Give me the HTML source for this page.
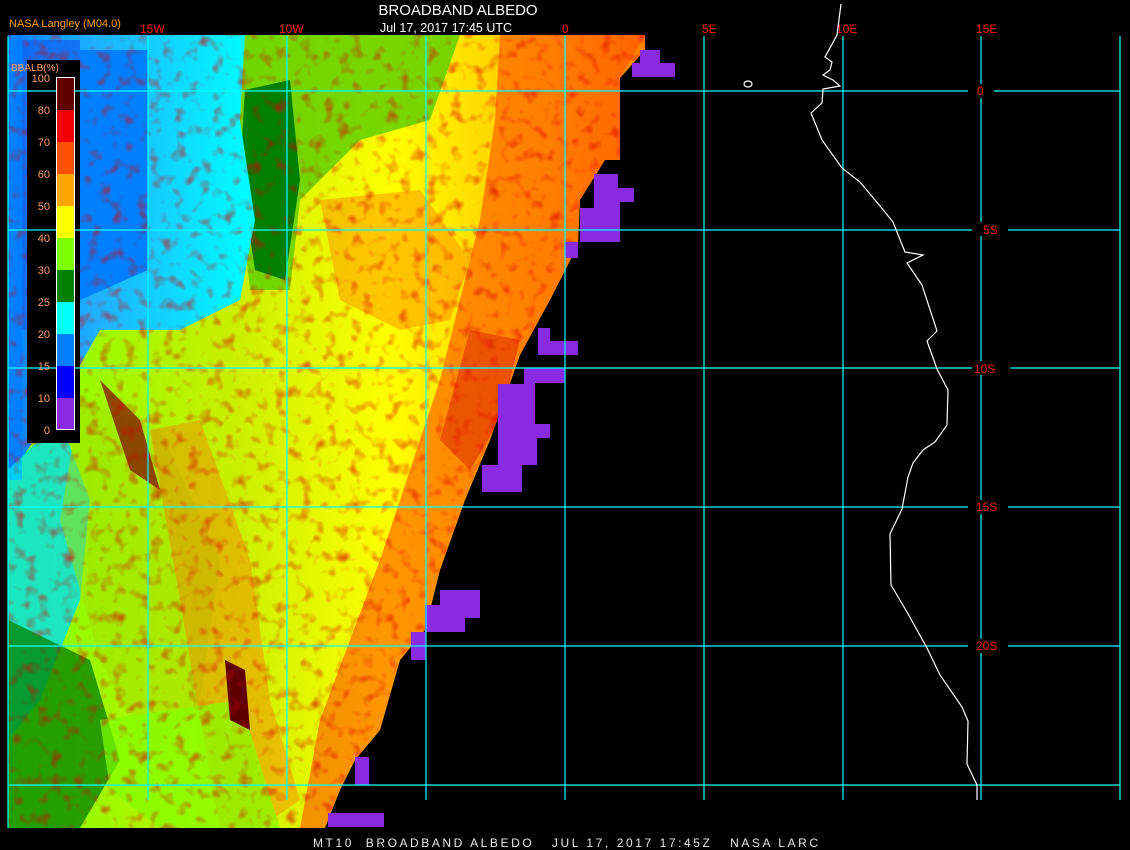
<!DOCTYPE html>
<html><head><meta charset="utf-8"><style>
html,body{margin:0;padding:0;background:#000;width:1130px;height:850px;overflow:hidden}
svg{display:block}
text{font-family:"Liberation Sans",sans-serif}
</style></head><body>
<svg width="1130" height="850" viewBox="0 0 1130 850" xmlns="http://www.w3.org/2000/svg">
<defs>
<linearGradient id="g1" x1="0" x2="1" y1="0" y2="0">
<stop offset="0" stop-color="#80ff00"/><stop offset="0.35" stop-color="#c8f000"/><stop offset="0.6" stop-color="#ffff00"/><stop offset="0.85" stop-color="#ffc000"/><stop offset="1" stop-color="#ff8000"/>
</linearGradient>
<linearGradient id="gb" x1="0" x2="1"><stop offset="0" stop-color="#0080ff"/><stop offset="0.35" stop-color="#20b0ff"/><stop offset="1" stop-color="#00ffff"/></linearGradient>
<filter id="tx"><feTurbulence type="fractalNoise" baseFrequency="0.08" numOctaves="2" seed="3"/><feColorMatrix values="0 0 0 0 0.7  0 0 0 0 0  0 0 0 0 0  0 0 0 1.6 -0.85"/><feComposite in2="SourceGraphic" operator="in"/></filter>
<clipPath id="cl"><polygon points="8,35 645,35 645,50 620,78 620,160 605,160 580,200 578,245 550,300 520,355 490,440 465,500 440,570 425,630 400,660 380,730 355,760 340,790 325,828 8,828"/></clipPath>
</defs>
<rect width="1130" height="850" fill="#000"/>
<g clip-path="url(#cl)">
<rect x="8" y="35" width="640" height="795" fill="url(#g1)"/>
<polygon points="500,35 645,35 620,78 620,160 580,200 578,245 550,300 520,355 490,440 465,500 440,570 425,630 400,660 380,730 355,760 340,790 325,828 300,828 320,720 350,640 380,560 410,470 440,380 460,300 480,220 495,120" fill="#ff5000" opacity="0.6"/>
<polygon points="320,200 420,190 470,260 450,320 400,330 340,300" fill="#ff9000" opacity="0.5"/>
<polygon points="470,330 520,340 500,420 470,470 440,440" fill="#e03000" opacity="0.6"/>
<polygon points="240,35 460,35 430,120 360,140 300,200 290,290 250,290 240,200" fill="#60d000" opacity="0.85"/>
<polygon points="245,90 290,80 300,180 285,280 255,270 240,170" fill="#008000"/>
<polygon points="8,35 245,35 240,120 255,220 240,300 180,330 100,330 60,400 8,480" fill="url(#gb)"/>
<rect x="8" y="35" width="14" height="445" fill="#0080ff"/>
<polygon points="22,40 80,40 80,320 22,330" fill="#1060f0" opacity="0.7"/>
<polygon points="80,50 148,50 148,270 80,300" fill="#0080ff"/>
<polygon points="8,470 60,420 90,500 80,600 40,700 8,740" fill="#00e0f0" opacity="0.8"/>
<polygon points="8,620 90,660 120,760 80,828 8,828" fill="#008000" opacity="0.75"/>
<polygon points="80,400 160,430 220,560 200,700 150,760 100,660 60,520" fill="#a0e000" opacity="0.5"/>
<polygon points="150,430 200,420 250,560 270,700 300,800 260,828 220,828 200,720 180,600" fill="#ff7000" opacity="0.4"/>
<polygon points="100,720 240,700 280,828 160,828 110,790" fill="#80ff00" opacity="0.7"/>
<polygon points="100,380 140,420 160,490 130,470" fill="#800000" opacity="0.7"/>
<polygon points="225,660 245,670 250,730 230,720" fill="#600000"/>
<rect x="8" y="35" width="640" height="795" filter="url(#tx)" fill="#fff"/>
</g>
<g fill="#8a2be2">
<polygon points="640,50 660,50 660,63 675,63 675,77 632,77 632,63 640,63"/>
<polygon points="594,174 618,174 618,188 634,188 634,202 620,202 620,242 580,242 580,208 594,208"/>
<rect x="565" y="242" width="13" height="16"/>
<polygon points="538,328 550,328 550,341 578,341 578,355 538,355"/>
<polygon points="524,368 565,368 565,383 535,383 535,424 550,424 550,438 537,438 537,465 522,465 522,492 482,492 482,465 498,465 498,384 524,384"/>
<polygon points="440,590 480,590 480,618 465,618 465,632 425,632 425,605 440,605"/>
<rect x="411" y="632" width="15" height="28"/>
<rect x="355" y="757" width="14" height="28"/>
<rect x="328" y="813" width="56" height="14"/>
</g>
<rect x="27" y="60" width="53" height="383" fill="#000"/>
<g stroke="#00ffff" stroke-width="1.2" fill="none">
<line x1="8" y1="91" x2="1120" y2="91"/><line x1="8" y1="230" x2="1120" y2="230"/>
<line x1="8" y1="368" x2="1120" y2="368"/><line x1="8" y1="507" x2="1120" y2="507"/>
<line x1="8" y1="646" x2="1120" y2="646"/><line x1="8" y1="785" x2="1120" y2="785"/>
<line x1="8" y1="36" x2="8" y2="828"/><line x1="148" y1="36" x2="148" y2="800"/>
<line x1="287" y1="36" x2="287" y2="800"/><line x1="426" y1="36" x2="426" y2="800"/>
<line x1="565" y1="36" x2="565" y2="800"/><line x1="704" y1="36" x2="704" y2="800"/>
<line x1="843" y1="36" x2="843" y2="800"/><line x1="981" y1="36" x2="981" y2="800"/>
<line x1="1120" y1="36" x2="1120" y2="800"/>
</g>
<g fill="#000"><rect x="968" y="84" width="26" height="14"/><rect x="972" y="222" width="36" height="14"/><rect x="972" y="361" width="38" height="14"/><rect x="968" y="500" width="40" height="14"/><rect x="968" y="639" width="40" height="14"/></g>
<g fill="#ff1010" font-size="12" font-family="Liberation Mono,monospace">
<text x="977" y="95">0</text><text x="983" y="234">5S</text><text x="974" y="373">10S</text><text x="976" y="511">15S</text><text x="976" y="650">20S</text>
<text x="140" y="33">15W</text><text x="279" y="33">10W</text><text x="562" y="33">0</text><text x="702" y="33">5E</text><text x="836" y="33">10E</text><text x="976" y="33">15E</text>
</g>
<polyline fill="none" stroke="#fff" stroke-width="1.2" points="841,4 837,35 825,57 832,62 830,70 823,75 833,80 840,86 823,89 822,103 811,113 822,140 842,168 860,182 880,206 893,222 905,252 923,255 907,263 922,285 937,331 927,341 937,369 948,390 947,425 935,442 923,450 913,463 908,477 902,509 890,534 891,585 907,612 927,648 940,675 962,707 968,721 967,764 977,785 977,800"/>
<ellipse cx="748" cy="84" rx="4" ry="3" fill="none" stroke="#fff" stroke-width="1.2"/>
<g>
<rect x="56" y="77" width="19" height="33" fill="#600000"/>
<rect x="56" y="110" width="19" height="32" fill="#f00000"/>
<rect x="56" y="142" width="19" height="32" fill="#ff5000"/>
<rect x="56" y="174" width="19" height="32" fill="#ffa500"/>
<rect x="56" y="206" width="19" height="32" fill="#ffff00"/>
<rect x="56" y="238" width="19" height="32" fill="#80ff00"/>
<rect x="56" y="270" width="19" height="32" fill="#008000"/>
<rect x="56" y="302" width="19" height="32" fill="#00ffff"/>
<rect x="56" y="334" width="19" height="32" fill="#0080ff"/>
<rect x="56" y="366" width="19" height="32" fill="#0000ff"/>
<rect x="56" y="398" width="19" height="32" fill="#8a2be2"/>
<rect x="56.5" y="77.5" width="18" height="352" fill="none" stroke="#fff"/>
</g>
<g fill="#ffa070" font-size="11" font-family="Liberation Mono,monospace" text-anchor="end">
<text x="50" y="82">100</text><text x="50" y="114">80</text><text x="50" y="146">70</text><text x="50" y="178">60</text><text x="50" y="210">50</text><text x="50" y="242">40</text><text x="50" y="274">30</text><text x="50" y="306">25</text><text x="50" y="338">20</text><text x="50" y="370">15</text><text x="50" y="402">10</text><text x="50" y="434">0</text>
</g>
<text x="11" y="71" fill="#ffa070" font-size="10" font-family="Liberation Mono,monospace">BBALB(%)</text>
<text x="9" y="27" fill="#ffa500" font-size="11">NASA Langley (M04.0)</text>
<text x="458" y="15" fill="#fff" font-size="15" text-anchor="middle">BROADBAND ALBEDO</text>
<text x="446" y="32" fill="#fff" font-size="12.5" text-anchor="middle">Jul 17, 2017 17:45 UTC</text>
<text x="313" y="847" fill="#e8e8e8" font-size="12" font-family="Liberation Mono,monospace" xml:space="preserve" textLength="505">MT10  BROADBAND ALBEDO   JUL 17, 2017 17:45Z   NASA LARC</text>
</svg>
</body></html>
